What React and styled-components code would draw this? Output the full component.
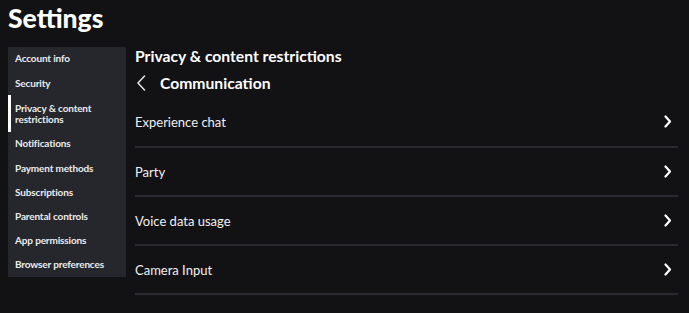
import React from 'react'
import styled, { createGlobalStyle } from 'styled-components'

const GlobalStyle = createGlobalStyle`
  body {
    margin: 0;
    background: #121215;
    font-family: Lato, "Noto Sans", sans-serif;
    color: #f2f2f2;
  }
`

const menu = [
  'Account info',
  'Security',
  'Privacy & content restrictions',
  'Notifications',
  'Payment methods',
  'Subscriptions',
  'Parental controls',
  'App permissions',
  'Browser preferences',
]

const rows = ['Experience chat', 'Party', 'Voice data usage', 'Camera Input']

const Chevron = ({ left }) => (
  left ? (
    <svg width="10" height="16" viewBox="0 0 10 16" fill="none">
      <path d="M8.5 1 L2 8 L8.5 15" stroke="#e6e6e6" strokeWidth="1.5" strokeLinecap="round" strokeLinejoin="round" />
    </svg>
  ) : (
    <svg width="8" height="13" viewBox="0 0 8 13" fill="none">
      <path d="M1.5 1.5 L6 6.5 L1.5 11.5" stroke="#ffffff" strokeWidth="2.2" strokeLinecap="round" strokeLinejoin="round" />
    </svg>
  )
)

export default function App() {
  return (
    <Page>
      <GlobalStyle />
      <Title>Settings</Title>
      <Layout>
        <Sidebar>
          {menu.map((m) => (
            <MenuItem key={m} $active={m.startsWith('Privacy')}>{m}</MenuItem>
          ))}
        </Sidebar>
        <Content>
          <Header>Privacy & content restrictions</Header>
          <SubHeader>
            <BackButton type='button'><Chevron left /></BackButton>
            Communication
          </SubHeader>
          {rows.map((r) => (
            <Row key={r}>
              <span>{r}</span>
              <Chevron />
            </Row>
          ))}
        </Content>
      </Layout>
    </Page>
  )
}

const Page = styled.div`
  padding: 0 11px 0 8px;
`

const Title = styled.h1`
  margin: 0;
  padding-top: 2px;
  height: 45px;
  font-size: 26.5px;
  font-weight: 900;
  line-height: 32px;
  color: #ffffff;
`

const Layout = styled.div`
  display: flex;
  gap: 9px;
  align-items: flex-start;
`

const Sidebar = styled.nav`
  width: 118px;
  height: 230px;
  background: #25272d;
  display: flex;
  flex-direction: column;
`

const MenuItem = styled.div`
  display: flex;
  align-items: center;
  height: ${(p) => (p.$active ? '36px' : '24.4px')};
  padding: ${(p) => (p.$active ? '1px' : '0')} 14px 0 7px;
  font-size: 10px;
  font-weight: 700;
  line-height: 11.5px;
  letter-spacing: -0.15px;
  color: #ececec;
  box-shadow: ${(p) => (p.$active ? 'inset 3px 0 0 #ffffff' : 'none')};
`

const Content = styled.main`
  flex: 1;
`

const Header = styled.h2`
  margin: 0;
  font-size: 15.7px;
  font-weight: 700;
  line-height: 18px;
  color: #ffffff;
`

const SubHeader = styled.h3`
  margin: 4px 0 0;
  height: 28px;
  display: flex;
  align-items: center;
  font-size: 15.7px;
  font-weight: 700;
  color: #ffffff;
`

const BackButton = styled.button`
  background: none;
  border: 0;
  padding: 0;
  margin: 0 14px 0 1px;
  display: flex;
  cursor: pointer;
`

const Row = styled.div`
  display: flex;
  align-items: center;
  justify-content: space-between;
  height: 47px;
  padding-right: 6px;
  border-bottom: 2px solid #2a2a30;
  font-size: 13px;
  color: #f0f0f0;
  &:first-of-type {
    height: 49px;
  }
`
